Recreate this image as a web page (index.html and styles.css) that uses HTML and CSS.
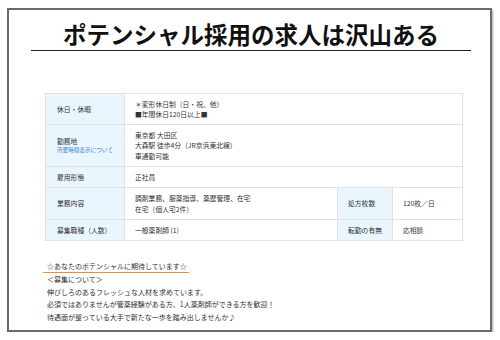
FILE: index.html
```html
<!DOCTYPE html>
<html lang="ja">
<head>
<meta charset="utf-8">
<link rel="stylesheet" href="styles.css">
</head>
<body>
<div class="frame">
  <h1 class="title">ポテンシャル採用の求人は沢山ある</h1>
  <table class="info">
    <colgroup>
      <col class="c1"><col class="c2"><col class="c3"><col class="c4">
    </colgroup>
    <tr class="r1">
      <th>休日・休暇</th>
      <td colspan="3">＊変形休日制（日・祝、他）<br>■年間休日120日以上■</td>
    </tr>
    <tr class="r2">
      <th>勤務地<span class="link">所要時間表示について</span></th>
      <td colspan="3">東京都 大田区<br>大森駅 徒歩4分（JR京浜東北線）<br>車通勤可能</td>
    </tr>
    <tr class="r3">
      <th>雇用形態</th>
      <td colspan="3">正社員</td>
    </tr>
    <tr class="r4">
      <th>業務内容</th>
      <td>調剤業務、服薬指導、薬歴管理、在宅<br>在宅（個人宅2件）</td>
      <th class="th2">処方枚数</th>
      <td class="td2">120枚／日</td>
    </tr>
    <tr class="r5">
      <th>募集職種（人数）</th>
      <td>一般薬剤師 (1)</td>
      <th class="th2">転勤の有無</th>
      <td class="td2">応相談</td>
    </tr>
  </table>
  <div class="notes">
    <p class="catch">☆あなたのポテンシャルに期待しています☆</p>
    <p>＜募集について＞</p>
    <p>伸びしろのあるフレッシュな人材を求めています。</p>
    <p>必須ではありませんが管薬経験がある方、1人薬剤師ができる方を歓迎！</p>
    <p>待遇面が整っている大手で新たな一歩を踏み出しませんか♪</p>
  </div>
</div>
</body>
</html>
```

FILE: styles.css
```css
html, body {
  margin: 0;
  padding: 0;
  background: #ffffff;
}
body {
  font-family: "Noto Sans CJK JP", "Noto Sans", sans-serif;
  color: #333333;
}
.frame {
  box-sizing: border-box;
  margin: 8px 0 0 7px;
  width: 485px;
  height: 324px;
  border: 2px solid #6a6a6a;
  box-shadow: 1px 2px 2px rgba(0, 0, 0, 0.35);
  background: #ffffff;
  padding-top: 8px;
}
.title {
  margin: 0 0 0 22px;
  width: 440px;
  height: 32px;
  border-bottom: 1px solid #222222;
  font-size: 23.5px;
  line-height: 32px;
  font-weight: 700;
  text-align: center;
  color: #111111;
  letter-spacing: 0;
}
.info {
  margin: 42px 0 0 36px;
  width: 417px;
  border-collapse: collapse;
  table-layout: fixed;
  font-size: 6.8px;
  line-height: 10.5px;
  border: 1px solid #e2e2e2;
}
.c1 { width: 79px; }
.c2 { width: 213px; }
.c3 { width: 55px; }
.c4 { width: 70px; }
.info th, .info td {
  border: 1px solid #e2e2e2;
  padding: 0 0 0 10px;
  text-align: left;
  vertical-align: middle;
  font-weight: 400;
  color: #333333;
}
.info th {
  background: #eaf6fd;
  padding-left: 11px;
}
.info .th2 { padding-left: 10px; }
.r1 { height: 31px; }
.r2 { height: 42px; }
.r3 { height: 21px; }
.r4 { height: 32px; }
.r5 { height: 21px; }
.link {
  display: block;
  font-size: 5.6px;
  line-height: 9px;
  color: #3b82d6;
}
.notes {
  margin: 20px 0 0 34px;
  font-size: 7px;
  line-height: 12.5px;
  color: #333333;
}
.notes p {
  margin: 0;
  padding-left: 4px;
}
.notes .catch {
  width: 142px;
  line-height: 11px;
  border-bottom: 1.5px solid #f08a3a;
}
```
